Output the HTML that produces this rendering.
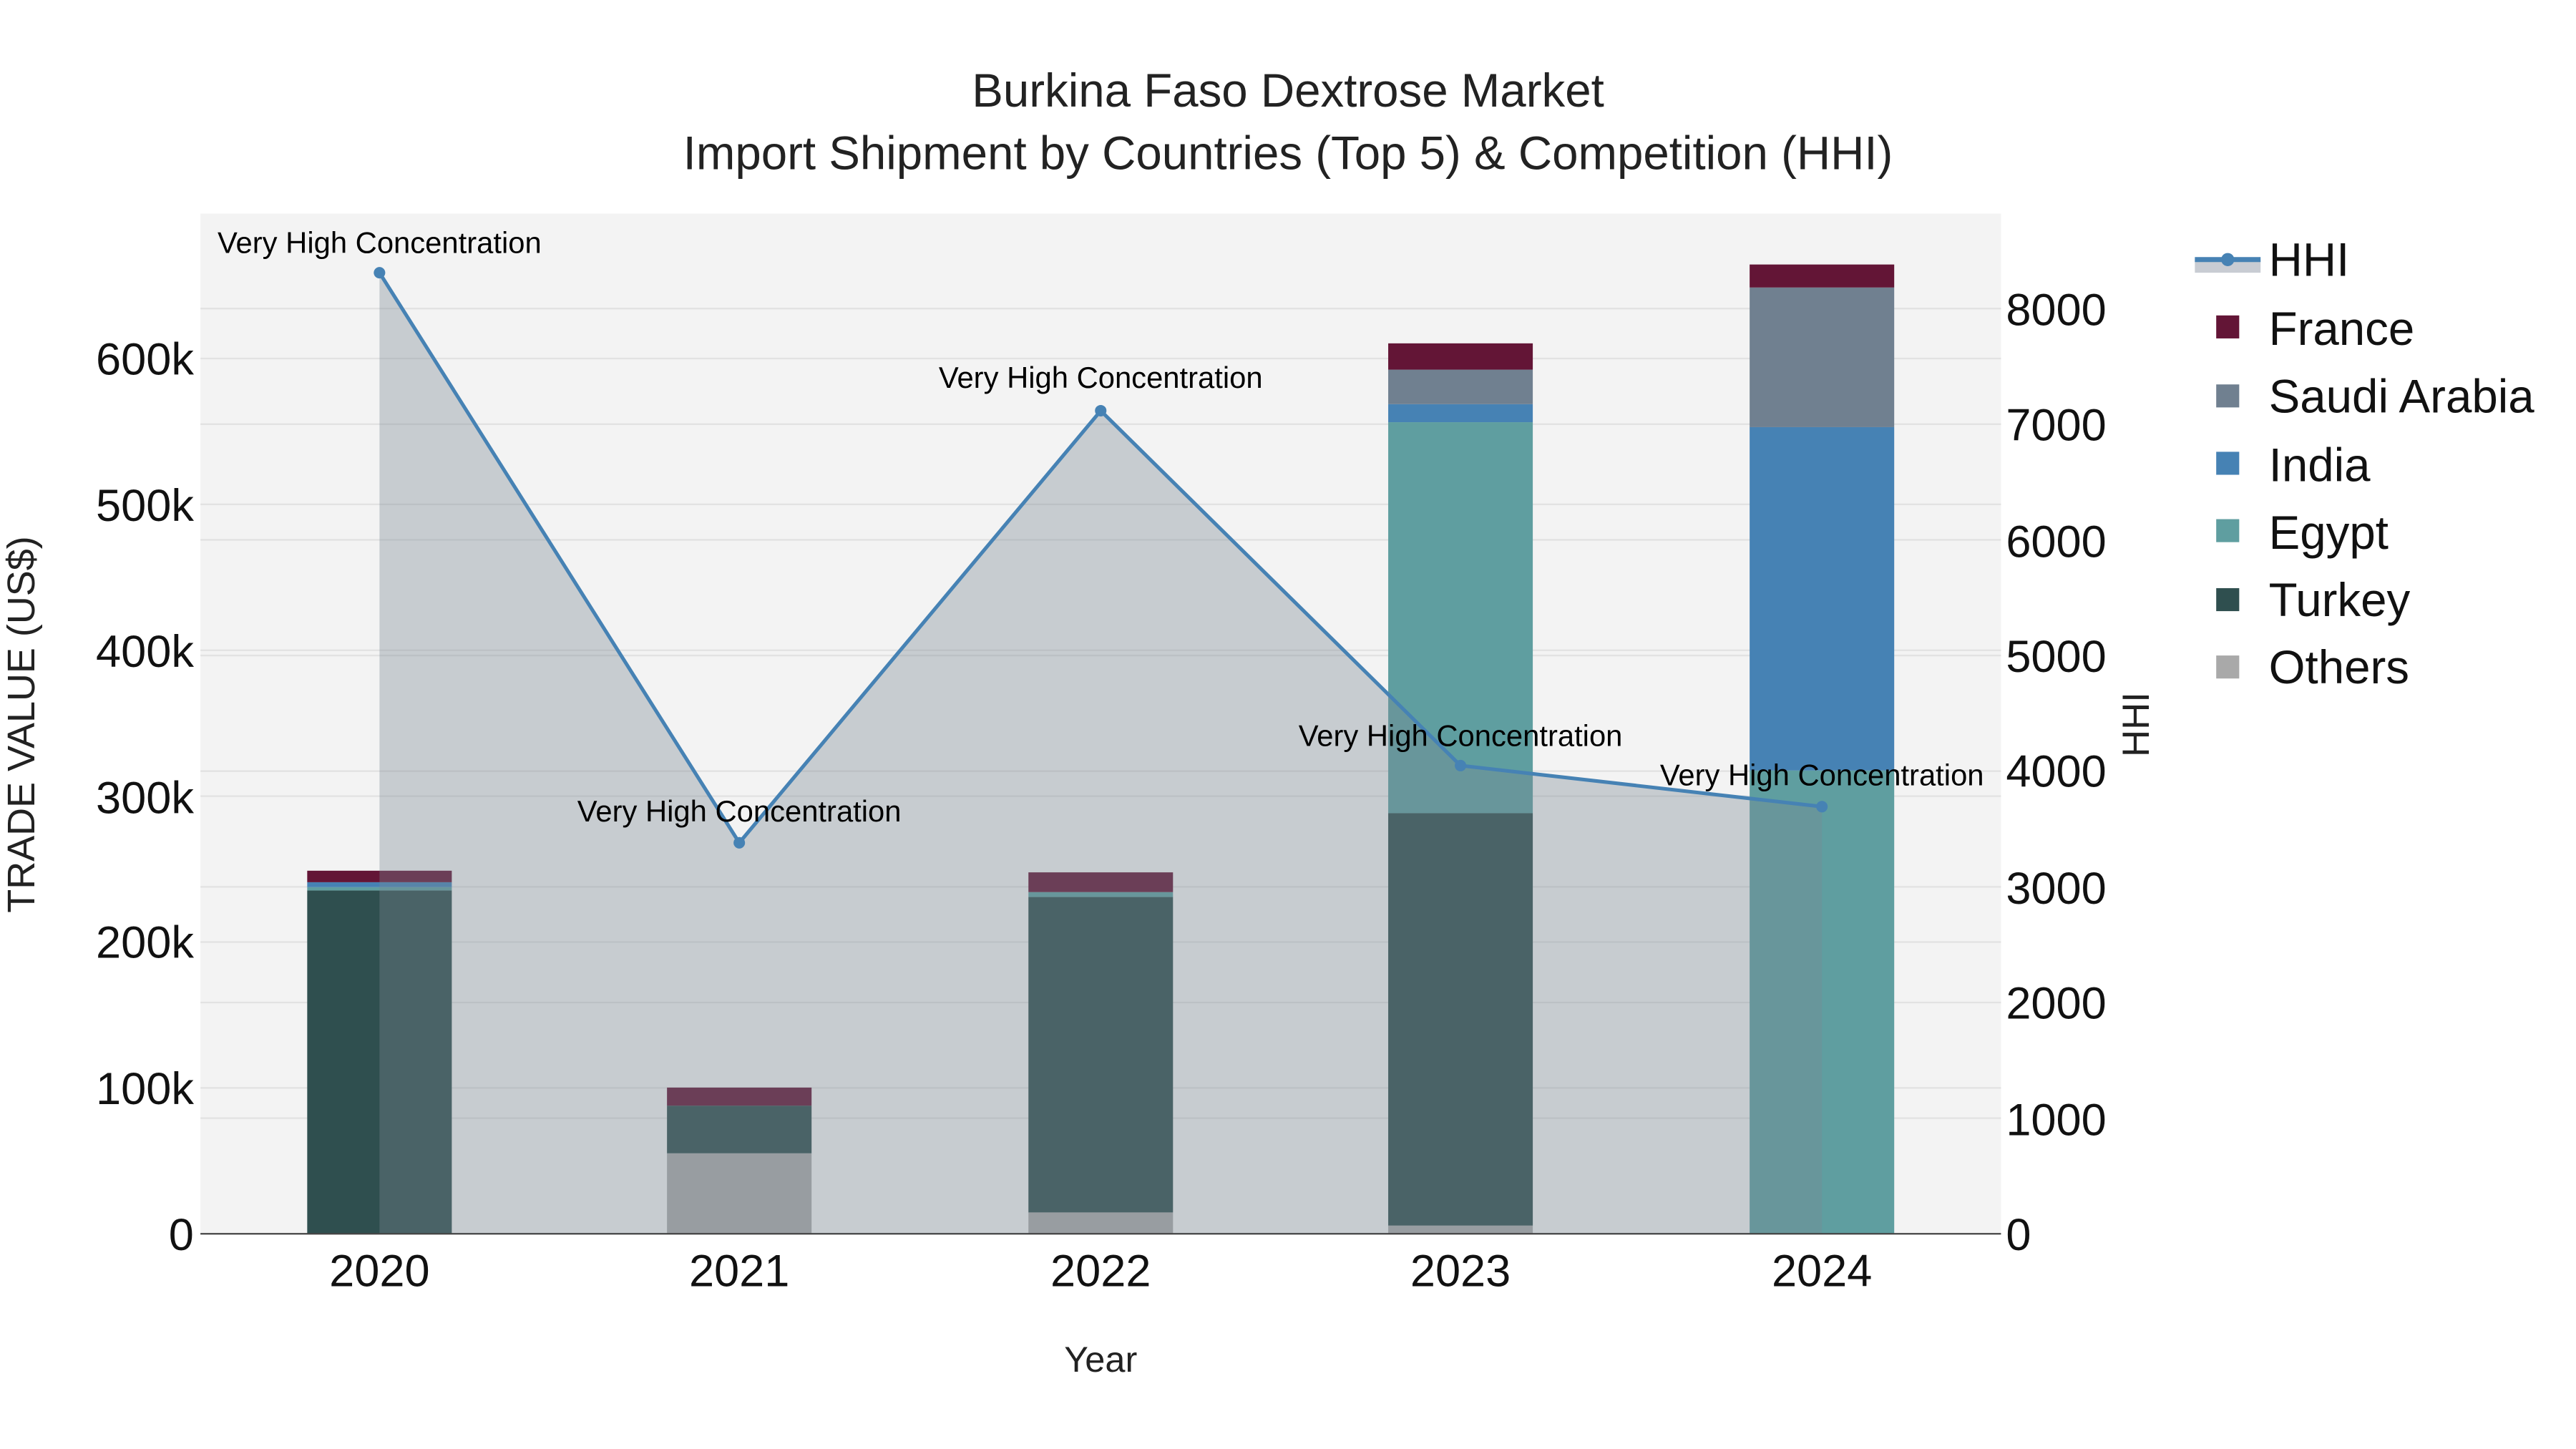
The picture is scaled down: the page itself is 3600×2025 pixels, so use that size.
<!DOCTYPE html>
<html><head><meta charset="utf-8"><style>html,body{margin:0;padding:0;background:#fff}svg{display:block}</style></head>
<body>
<svg width="3600" height="2025" viewBox="0 0 1568 882" xmlns="http://www.w3.org/2000/svg" font-family="Liberation Sans, Arial, sans-serif">
<rect width="1568" height="882" fill="#fff"/>
<rect x="122" y="130" width="1096" height="621" fill="#f3f3f3"/>
<g stroke="#e2e2e2" stroke-width="1">
<line x1="122" x2="1218" y1="662.2" y2="662.2"/><line x1="122" x2="1218" y1="573.4" y2="573.4"/><line x1="122" x2="1218" y1="484.6" y2="484.6"/><line x1="122" x2="1218" y1="395.8" y2="395.8"/><line x1="122" x2="1218" y1="307" y2="307"/><line x1="122" x2="1218" y1="218.2" y2="218.2"/>
<line x1="122" x2="1218" y1="680.6" y2="680.6"/><line x1="122" x2="1218" y1="610.2" y2="610.2"/><line x1="122" x2="1218" y1="539.8" y2="539.8"/><line x1="122" x2="1218" y1="469.4" y2="469.4"/><line x1="122" x2="1218" y1="399" y2="399"/><line x1="122" x2="1218" y1="328.6" y2="328.6"/><line x1="122" x2="1218" y1="258.2" y2="258.2"/><line x1="122" x2="1218" y1="187.8" y2="187.8"/>
</g>
<g>
<rect x="187" y="542" width="88" height="209" fill="#2f4f4f"/>
<rect x="187" y="540" width="88" height="2" fill="#5f9ea0"/>
<rect x="187" y="537" width="88" height="3" fill="#4682b4"/>
<rect x="187" y="530" width="88" height="7" fill="#631536"/>

<rect x="406" y="702" width="88" height="49" fill="#a9a9a9"/>
<rect x="406" y="673" width="88" height="29" fill="#2f4f4f"/>
<rect x="406" y="662" width="88" height="11" fill="#631536"/>

<rect x="626" y="738" width="88" height="13" fill="#a9a9a9"/>
<rect x="626" y="546" width="88" height="192" fill="#2f4f4f"/>
<rect x="626" y="543" width="88" height="3" fill="#5f9ea0"/>
<rect x="626" y="531" width="88" height="12" fill="#631536"/>

<rect x="845" y="746" width="88" height="5" fill="#a9a9a9"/>
<rect x="845" y="495" width="88" height="251" fill="#2f4f4f"/>
<rect x="845" y="257" width="88" height="238" fill="#5f9ea0"/>
<rect x="845" y="246" width="88" height="11" fill="#4682b4"/>
<rect x="845" y="225" width="88" height="21" fill="#708090"/>
<rect x="845" y="209" width="88" height="16" fill="#631536"/>

<rect x="1065" y="469" width="88" height="282" fill="#5f9ea0"/>
<rect x="1065" y="260" width="88" height="209" fill="#4682b4"/>
<rect x="1065" y="175" width="88" height="85" fill="#708090"/>
<rect x="1065" y="161" width="88" height="14" fill="#631536"/>
</g>
<polygon points="231,166 450,513 670,250 889,466 1109,491 1109,751 231,751" fill="rgb(123,135,148)" fill-opacity="0.36"/>
<polyline points="231,166 450,513 670,250 889,466 1109,491" fill="none" stroke="#4682b4" stroke-width="2.2"/>
<g fill="#4682b4"><circle cx="231" cy="166" r="3.5"/><circle cx="450" cy="513" r="3.5"/><circle cx="670" cy="250" r="3.5"/><circle cx="889" cy="466" r="3.5"/><circle cx="1109" cy="491" r="3.5"/></g>
<line x1="122" x2="1218" y1="751" y2="751" stroke="#444" stroke-width="1"/>
<g font-size="18.2" fill="#000" text-anchor="middle">
<text x="231" y="154">Very High Concentration</text>
<text x="450" y="500">Very High Concentration</text>
<text x="670" y="236">Very High Concentration</text>
<text x="889" y="454">Very High Concentration</text>
<text x="1109" y="478">Very High Concentration</text>
</g>
<g font-size="27.5" fill="#111" text-anchor="end">
<text x="118" y="761">0</text><text x="118" y="672">100k</text><text x="118" y="583">200k</text><text x="118" y="495">300k</text><text x="118" y="406">400k</text><text x="118" y="317">500k</text><text x="118" y="228">600k</text>
</g>
<g font-size="27.5" fill="#111" text-anchor="start">
<text x="1221" y="761">0</text><text x="1221" y="691">1000</text><text x="1221" y="620">2000</text><text x="1221" y="550">3000</text><text x="1221" y="479">4000</text><text x="1221" y="409">5000</text><text x="1221" y="339">6000</text><text x="1221" y="268">7000</text><text x="1221" y="198">8000</text>
</g>
<g font-size="27.5" fill="#111" text-anchor="middle">
<text x="231" y="783">2020</text><text x="450" y="783">2021</text><text x="670" y="783">2022</text><text x="889" y="783">2023</text><text x="1109" y="783">2024</text>
</g>
<text x="670" y="835" font-size="22" fill="#222" text-anchor="middle">Year</text>
<text transform="translate(21,441) rotate(-90)" font-size="23.5" fill="#222" text-anchor="middle">TRADE VALUE (US$)</text>
<text transform="translate(1308,441) rotate(-90)" font-size="23" fill="#222" text-anchor="middle">HHI</text>
<g font-size="28.5" fill="#222" text-anchor="middle">
<text x="784" y="65">Burkina Faso Dextrose Market</text>
<text x="784" y="103">Import Shipment by Countries (Top 5) &amp; Competition (HHI)</text>
</g>
<rect x="1336" y="158" width="40" height="8" fill="#c8ccd3"/>
<line x1="1336" x2="1376" y1="158" y2="158" stroke="#4682b4" stroke-width="3"/>
<circle cx="1356" cy="158" r="4" fill="#4682b4"/>
<g>
<rect x="1349" y="192" width="14" height="14" fill="#631536"/>
<rect x="1349" y="234" width="14" height="14" fill="#708090"/>
<rect x="1349" y="275" width="14" height="14" fill="#4682b4"/>
<rect x="1349" y="316" width="14" height="14" fill="#5f9ea0"/>
<rect x="1349" y="358" width="14" height="14" fill="#2f4f4f"/>
<rect x="1349" y="399" width="14" height="14" fill="#a9a9a9"/>
</g>
<g font-size="28.5" fill="#111">
<text x="1381" y="168">HHI</text><text x="1381" y="210">France</text><text x="1381" y="251">Saudi Arabia</text><text x="1381" y="293">India</text><text x="1381" y="334">Egypt</text><text x="1381" y="375">Turkey</text><text x="1381" y="416">Others</text>
</g>
</svg>
</body></html>
